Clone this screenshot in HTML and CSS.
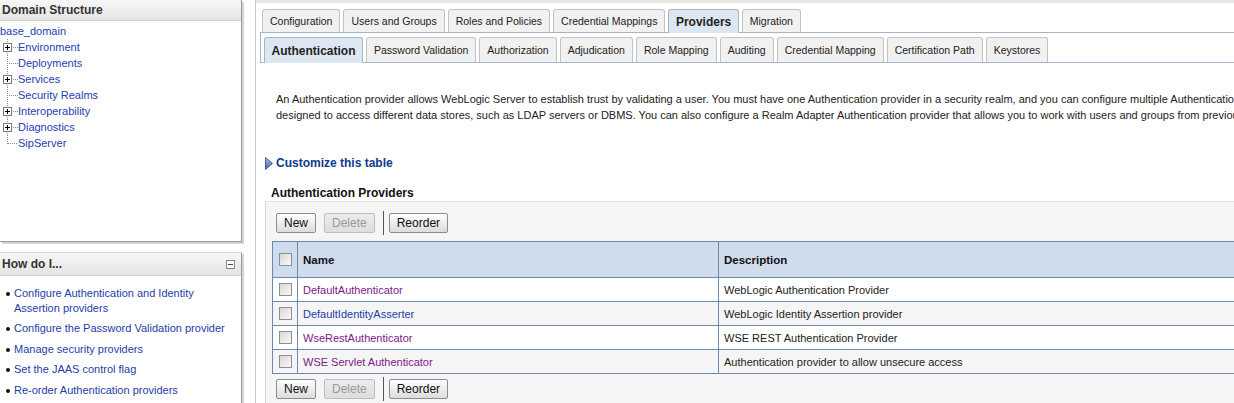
FILE: index.html
```html
<!DOCTYPE html>
<html>
<head>
<meta charset="utf-8">
<link rel="stylesheet" href="styles.css">
</head>
<body>
<div class="page">
  <aside class="left">
    <section class="panel panel-domain">
      <div class="panel-head">Domain Structure</div>
      <div class="tree">
        <div class="tree-root">base_domain</div>
        <ul class="tree-list">
          <li><span class="exp"></span><a>Environment</a></li>
          <li><span class="noexp"></span><a>Deployments</a></li>
          <li><span class="exp"></span><a>Services</a></li>
          <li><span class="noexp"></span><a>Security Realms</a></li>
          <li><span class="exp"></span><a>Interoperability</a></li>
          <li><span class="exp"></span><a>Diagnostics</a></li>
          <li class="last"><span class="noexp"></span><a>SipServer</a></li>
        </ul>
      </div>
    </section>
    <section class="panel panel-how">
      <div class="panel-head"><span>How do I...</span><span class="collapse"></span></div>
      <ul class="how-list">
        <li><a>Configure Authentication and Identity Assertion providers</a></li>
        <li><a>Configure the Password Validation provider</a></li>
        <li><a>Manage security providers</a></li>
        <li><a>Set the JAAS control flag</a></li>
        <li><a>Re-order Authentication providers</a></li>
      </ul>
    </section>
  </aside>
  <main class="main">
    <div class="top-strip"></div>
    <div class="tabs-wrap">
      <div class="tabs tabs-1">
        <span class="tab">Configuration</span>
        <span class="tab">Users and Groups</span>
        <span class="tab">Roles and Policies</span>
        <span class="tab">Credential Mappings</span>
        <span class="tab sel">Providers</span>
        <span class="tab">Migration</span>
      </div>
      <div class="tabs tabs-2">
        <span class="tab sel">Authentication</span>
        <span class="tab">Password Validation</span>
        <span class="tab">Authorization</span>
        <span class="tab">Adjudication</span>
        <span class="tab">Role Mapping</span>
        <span class="tab">Auditing</span>
        <span class="tab">Credential Mapping</span>
        <span class="tab">Certification Path</span>
        <span class="tab">Keystores</span>
      </div>
    </div>
    <div class="intro">
      <span class="line">An Authentication provider allows WebLogic Server to establish trust by validating a user. You must have one Authentication provider in a security realm, and you can configure multiple Authentication providers in a security realm. Different types of Authentication providers are</span>
      <span class="line">designed to access different data stores, such as LDAP servers or DBMS. You can also configure a Realm Adapter Authentication provider that allows you to work with users and groups from previous releases of WebLogic Server.</span>
    </div>
    <div class="customize">
      <svg class="arrow" width="8" height="13" viewBox="0 0 8 13"><defs><linearGradient id="ag" x1="0" y1="0" x2="0" y2="1"><stop offset="0" stop-color="#a9c2e8"/><stop offset="1" stop-color="#3a62b0"/></linearGradient></defs><polygon points="0.5,0.5 7.5,6.5 0.5,12.5" fill="url(#ag)" stroke="#4a5f88" stroke-width="1"/></svg>
      <span>Customize this table</span>
    </div>
    <div class="table-title">Authentication Providers</div>
    <div class="table-box">
      <div class="btn-row">
        <span class="btn">New</span>
        <span class="btn disabled">Delete</span>
        <span class="sep"></span>
        <span class="btn">Reorder</span>
      </div>
      <table class="grid">
        <thead>
          <tr><th class="c-chk"><span class="chk"></span></th><th class="c-name">Name</th><th class="c-desc">Description</th></tr>
        </thead>
        <tbody>
          <tr><td class="c-chk"><span class="chk"></span></td><td><a class="visited">DefaultAuthenticator</a></td><td>WebLogic Authentication Provider</td></tr>
          <tr class="alt"><td class="c-chk"><span class="chk"></span></td><td><a>DefaultIdentityAsserter</a></td><td>WebLogic Identity Assertion provider</td></tr>
          <tr><td class="c-chk"><span class="chk"></span></td><td><a class="visited">WseRestAuthenticator</a></td><td>WSE REST Authentication Provider</td></tr>
          <tr class="alt"><td class="c-chk"><span class="chk"></span></td><td><a class="visited">WSE Servlet Authenticator</a></td><td>Authentication provider to allow unsecure access</td></tr>
        </tbody>
      </table>
      <div class="btn-row bottom">
        <span class="btn">New</span>
        <span class="btn disabled">Delete</span>
        <span class="sep"></span>
        <span class="btn">Reorder</span>
      </div>
    </div>
  </main>
</div>
</body>
</html>
```

FILE: styles.css
```css
* { box-sizing: border-box; }
html, body { margin: 0; padding: 0; }
body {
  width: 1234px;
  height: 403px;
  overflow: hidden;
  background: #fff;
  font-family: "Liberation Sans", Arial, sans-serif;
  font-size: 11px;
  color: #222;
}
a { text-decoration: none; color: #1f3cb4; }
ul { list-style: none; margin: 0; padding: 0; }

.page { display: flex; height: 403px; }

/* Left column */
.left {
  width: 256px;
  flex: none;
  display: flex;
  flex-direction: column;
  gap: 10px;
  border-right: 1px solid #c8c8c8;
}
.panel {
  width: 242px;
  background: #fff;
  border-right: 1px solid #9a9a9a;
  box-shadow: 2px 2px 0 #d4d4d4;
}
.panel-domain {
  height: 242px;
  border-bottom: 1px solid #9a9a9a;
}
.panel-head {
  height: 21px;
  padding: 0 6px 0 2px;
  display: flex;
  align-items: center;
  justify-content: space-between;
  font-size: 12px;
  font-weight: bold;
  color: #333;
  background: linear-gradient(#f7f7f7, #e4e4e4);
  border-bottom: 1px solid #d0d0d0;
}
.panel-how { flex: 1; border-top: 1px solid #d6d6d6; }
.panel-how .panel-head { height: 23px; padding-top: 1px; }
.tree { padding-top: 2px; }
.tree-root { height: 16px; line-height: 16px; color: #1f3cb4; }
.tree-list li {
  height: 16px;
  display: flex;
  align-items: center;
  background:
    repeating-linear-gradient(to bottom, #8a8a8a 0 1px, transparent 1px 2px) no-repeat 7px 0 / 1px 100%,
    repeating-linear-gradient(to right, #8a8a8a 0 1px, transparent 1px 2px) no-repeat 9px 8px / 9px 1px;
}
.tree-list li.last {
  background:
    repeating-linear-gradient(to bottom, #8a8a8a 0 1px, transparent 1px 2px) no-repeat 7px 0 / 1px 9px,
    repeating-linear-gradient(to right, #8a8a8a 0 1px, transparent 1px 2px) no-repeat 8px 8px / 10px 1px;
}
.exp {
  width: 9px;
  height: 9px;
  margin: 0 6px 0 3px;
  border: 1px solid #7a7a7a;
  background:
    linear-gradient(#000, #000) no-repeat 1px 3px / 5px 1px,
    linear-gradient(#000, #000) no-repeat 3px 1px / 1px 5px,
    #fff;
}
.noexp { width: 18px; }
.tree-list a { line-height: 16px; }

.collapse {
  width: 9px;
  height: 9px;
  border: 1px solid #888;
  background: linear-gradient(#444, #444) no-repeat 1px 3px / 5px 1px, #fff;
}
.how-list { padding: 10px 0 0 6px; }
.how-list li {
  display: flex;
  line-height: 15px;
  margin-bottom: 5.5px;
}
.how-list li::before {
  content: "";
  flex: none;
  width: 4px;
  height: 4px;
  margin: 6px 4px 0 0;
  border-radius: 50%;
  background: #111;
}
.how-list a { color: #1f3ca8; }

/* Main */
.main {
  flex: 1;
  min-width: 0;
  overflow: hidden;
}
.top-strip { height: 3px; background: #e6e6e3; }
.tabs-wrap { margin: 6px 0 0 4px; }
.tabs { display: flex; gap: 3px; white-space: nowrap; }
.tabs-1 {
  padding-left: 2px;
  height: 24px;
  border-bottom: 1px solid #a4b6c9;
}
.tabs-2 {
  padding: 4px 0 0 3px;
  height: 30px;
  border-left: 1px solid #a4b6c9;
  border-bottom: 1px solid #a4b6c9;
}
.tab {
  display: flex;
  align-items: center;
  padding: 0 7px;
  height: 100%;
  background: #f1f1f1;
  border: 1px solid #c3c3c3;
  border-bottom: none;
  border-radius: 3px 3px 0 0;
  color: #222;
  font-size: 10.5px;
}
.tab.sel {
  font-weight: bold;
  font-size: 12px;
  padding: 0 6.5px;
  background: #dde7f1;
  border-color: #a4b6c9;
  height: calc(100% + 1px);
  margin-bottom: -1px;
}

.intro { padding: 28px 0 0 20px; line-height: 16px; }
.intro .line { display: block; white-space: nowrap; }

.customize {
  display: flex;
  align-items: center;
  gap: 3px;
  margin: 32px 0 0 9px;
  height: 16px;
  font-size: 12px;
  font-weight: bold;
  color: #0b3b8c;
}
.table-title {
  margin: 14px 0 0 15px;
  height: 16px;
  line-height: 16px;
  font-size: 12px;
  font-weight: bold;
  color: #111;
}
.table-box {
  margin: 0 0 0 9px;
  width: 1100px;
  height: 210px;
  background: #f5f5f5;
  border-left: 1px solid #d3d3d3;
  border-top: 1px solid #e2e2e2;
  padding: 9px 0 0 6px;
}
.btn-row {
  display: flex;
  align-items: center;
  gap: 8px;
  padding-left: 4px;
  height: 24px;
}
.btn-row.bottom { margin-top: 3px; padding-left: 4px; }
.btn {
  height: 20px;
  padding: 0 7px;
  display: flex;
  align-items: center;
  border: 1px solid #8d8d8d;
  border-radius: 2px;
  background: linear-gradient(#fefefe, #dcdcdc);
  color: #111;
  font-size: 12px;
}
.btn.disabled {
  color: #9a9a9a;
  border-color: #bdbdbd;
  background: linear-gradient(#ececec, #dedede);
}
.sep {
  width: 1px;
  height: 24px;
  background: #555;
  margin: 0 -3px 0 0;
}
.grid {
  margin-top: 6px;
  width: 1000px;
  border-collapse: collapse;
  table-layout: fixed;
  border: 1px solid #6f89a9;
}
.grid th, .grid td {
  border: 1px solid #6f89a9;
  text-align: left;
  padding: 0 5px;
  white-space: nowrap;
}
.grid th {
  height: 36px;
  background: #cfdcee;
  font-weight: bold;
  font-size: 11.5px;
  color: #111;
}
.grid td { height: 24px; background: #fff; }
.grid tr.alt td { background: #f5f5f5; }
.grid .c-chk { width: 25px; padding: 0 0 0 6px; }
.grid .c-name { width: 421px; }
.grid a { color: #1f3ca8; }
.grid a.visited { color: #7a1a86; }
.chk {
  display: block;
  width: 13px;
  height: 13px;
  border: 1px solid #8e8e8e;
  background: linear-gradient(135deg, #d6d6d6, #fbfbfb);
}
```
